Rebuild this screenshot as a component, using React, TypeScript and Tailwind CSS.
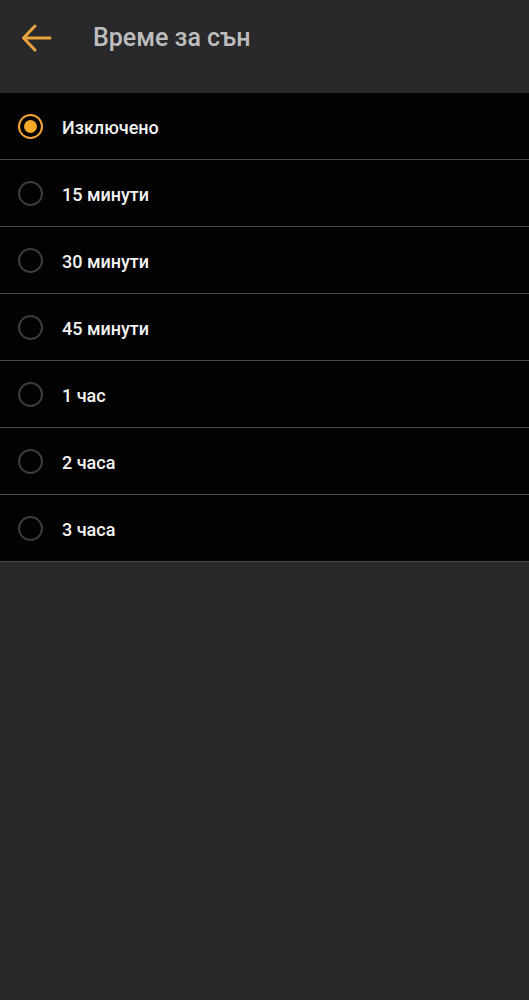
import React from 'react';

const options = ['Изключено', '15 минути', '30 минути', '45 минути', '1 час', '2 часа', '3 часа'];

const App = () => {
  const [selected, setSelected] = React.useState(0);

  return (
    <div className="min-h-[1000px] bg-[#29282b] font-['Roboto',sans-serif]">
      {/* Top bar */}
      <div className="h-[93px] flex items-center pb-[17px]">
        <button className="ml-[20px] w-[32px] h-[32px] flex items-center justify-center" aria-label="Back">
          <svg width="32" height="32" viewBox="0 0 32 32" fill="none">
            <path
              d="M30 16H4M15 4L3.5 16L15 28"
              stroke="#e9a53b"
              strokeWidth="3"
              strokeLinecap="round"
              strokeLinejoin="round"
            />
          </svg>
        </button>
        <h1 className="ml-[41px] text-[25px] font-medium text-[#bdbdbd]">Време за сън</h1>
      </div>

      {/* Options */}
      <div className="bg-[#020202]">
        {options.map((label, i) => (
          <div
            key={label}
            onClick={() => setSelected(i)}
            className="h-[67px] flex items-center border-b border-[#464548] cursor-pointer"
          >
            <div
              className={`ml-[18px] w-[25px] h-[25px] rounded-full border-2 flex items-center justify-center ${
                selected === i ? 'border-[#f2a531]' : 'border-[#3d3d3f]'
              }`}
            >
              {selected === i && <div className="w-[13px] h-[13px] rounded-full bg-[#f7a826]" />}
            </div>
            <span className="ml-[19px] pt-[2px] text-[18px] font-medium text-[#f4f4f4]">{label}</span>
          </div>
        ))}
      </div>
    </div>
  );
};

export default App;
